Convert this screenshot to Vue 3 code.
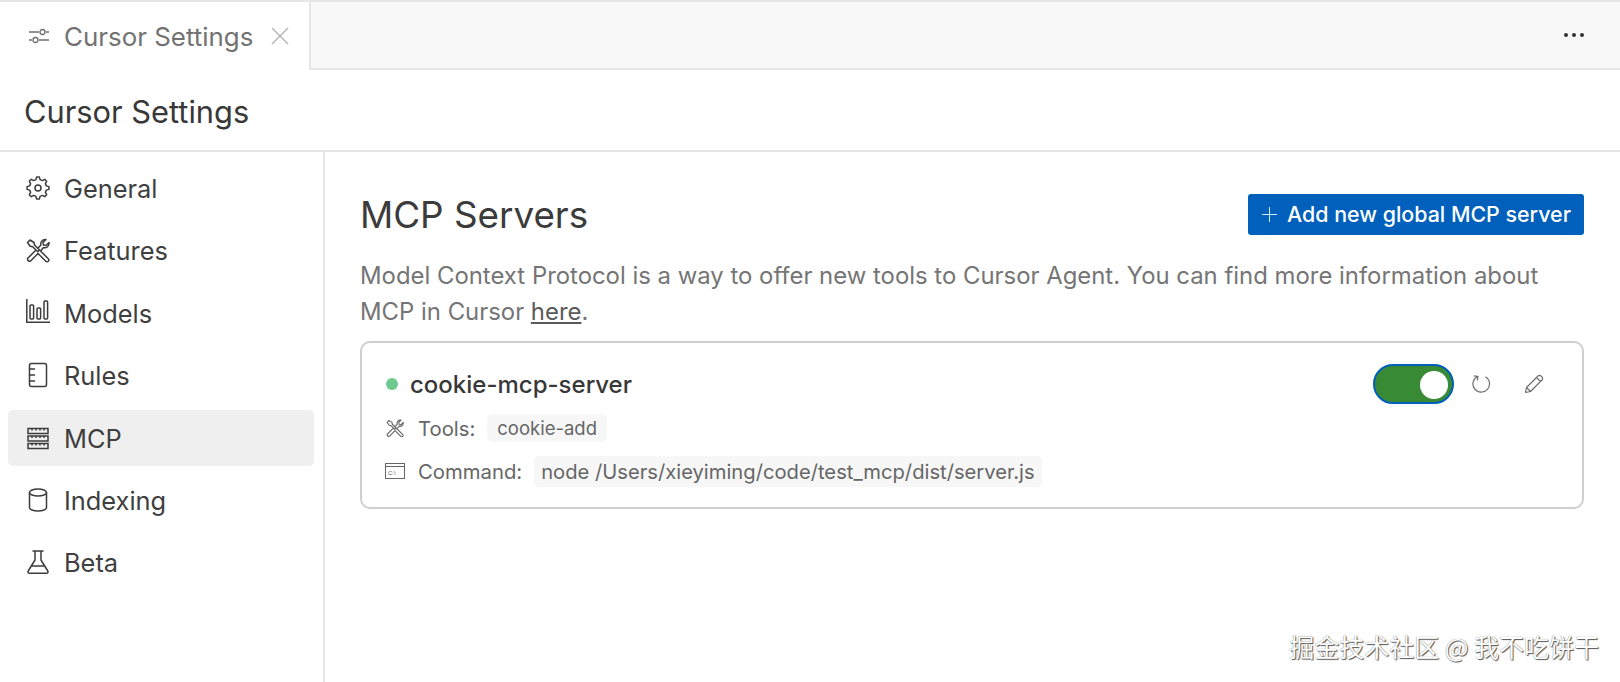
<script setup>
const navItems = [
  { name: 'General', icon: 'gear' },
  { name: 'Features', icon: 'tools' },
  { name: 'Models', icon: 'chart' },
  { name: 'Rules', icon: 'book' },
  { name: 'MCP', icon: 'server', active: true },
  { name: 'Indexing', icon: 'db' },
  { name: 'Beta', icon: 'flask' },
]

function gearPath() {
  const pts = []
  const teeth = 8
  for (let i = 0; i < teeth; i++) {
    const a = (i * 2 * Math.PI) / teeth
    const w = (2 * Math.PI) / teeth
    const list = [
      [8.6, a - w * 0.32],
      [11, a - w * 0.16],
      [11, a + w * 0.16],
      [8.6, a + w * 0.32],
    ]
    for (const [r, t] of list) {
      pts.push(`${(12 + r * Math.sin(t)).toFixed(2)} ${(12 - r * Math.cos(t)).toFixed(2)}`)
    }
  }
  return 'M' + pts.join('L') + 'Z'
}
const gear = gearPath()
const toolsPath = 'M1.500 4.500 4 2l4 2.500.5 2.500 5 5-1.800 1.800-5-5-2.500-.5zM14.500 13l7.800 7.800a1.700 1.700 0 0 1-2.500 2.500L12 15.500M12.500 9.500l2.500-2.500c-.9-3 1.500-6 5-5.500l-3 3 .5 2.500 2.500.5 3-3c.5 3.500-2.500 6-5.500 5L14.500 13M9.500 12.500 2 20a2 2 0 0 0 2.800 2.800l7.200-7.300'
</script>

<template>
  <div class="page">
    <header class="tabbar">
      <div class="tab">
        <svg class="tab-ico" viewBox="0 0 20 16" fill="none" stroke="#6f6f6f" stroke-width="1.300">
          <path d="M0 4h10M17 4h3M0 12h3M10 12h10" />
          <circle cx="13.500" cy="4" r="2.500" />
          <circle cx="6.500" cy="12" r="2.500" />
        </svg>
        <span class="tab-label">Cursor Settings</span>
        <svg class="tab-close" viewBox="0 0 18 18" fill="none" stroke="#b4b4b4" stroke-width="1.400">
          <path d="M1 1l16 16M17 1L1 17" />
        </svg>
      </div>
      <div class="tab-rest">
        <span class="dots"><i></i><i></i><i></i></span>
      </div>
    </header>
    <div class="title-bar">Cursor Settings</div>
    <div class="body">
      <nav class="side">
        <a v-for="item in navItems" :key="item.name" class="nav" :class="{ active: item.active }">
          <svg class="nav-ico" viewBox="0 0 24 24" fill="none" stroke="#3c3c3c" stroke-width="1.500" stroke-linejoin="round" stroke-linecap="round">
            <template v-if="item.icon === 'gear'">
              <circle cx="12" cy="12" r="3" />
              <path :d="gear" />
            </template>
            <path v-else-if="item.icon === 'tools'" :d="toolsPath" />
            <g v-else-if="item.icon === 'chart'" transform="translate(0 -2)" stroke-linecap="butt" stroke-linejoin="miter">
              <path d="M.8 0v23.200H24" />
              <rect x="4" y="6" width="3.600" height="14" rx="1" />
              <rect x="11" y="9" width="3.600" height="11" rx="1" />
              <rect x="18" y="2" width="3.600" height="18" rx="1" />
            </g>
            <template v-else-if="item.icon === 'book'">
              <rect x="3.500" y="0.500" width="17" height="23" rx="2" />
              <path d="M3.500 6h5M3.500 12h5M3.500 18h5" />
            </template>
            <g v-else-if="item.icon === 'server'" stroke-linecap="butt" stroke-linejoin="miter">
              <rect x="2" y="2.500" width="20" height="5" />
              <rect x="2" y="10" width="20" height="5" />
              <rect x="2" y="17.500" width="20" height="5" />
              <path d="M6 2.500v2M10 2.500v2M14 2.500v2M18 2.500v2M6 10v2M10 10v2M14 10v2M18 10v2M6 17.500v2M10 17.500v2M14 17.500v2M18 17.500v2" />
            </g>
            <template v-else-if="item.icon === 'db'">
              <ellipse cx="12" cy="4.500" rx="8.500" ry="3.500" />
              <path d="M3.500 4.500v15c0 2 3.800 3.500 8.500 3.500s8.500-1.500 8.500-3.500v-15" />
            </template>
            <path v-else d="M7 1h10M9 1v9L2.200 21a1.500 1.500 0 0 0 1.300 2.300h17a1.500 1.500 0 0 0 1.300-2.300L15 10V1M5.500 16h13" />
          </svg>
          <span class="nav-label">{{ item.name }}</span>
        </a>
      </nav>
      <main class="main">
        <div class="head">
          <h1>MCP Servers</h1>
          <button class="add"><span class="plus"></span>Add new global MCP server</button>
        </div>
        <p class="desc">Model Context Protocol is a way to offer new tools to Cursor Agent. You can find more information about MCP in Cursor <u>here</u>.</p>
        <section class="card">
          <div class="card-top">
            <span class="dot"></span>
            <span class="server-name">cookie-mcp-server</span>
            <span class="actions">
              <span class="switch"><span class="knob"></span></span>
              <svg class="act refresh" viewBox="0 0 20 20" fill="none" stroke="#6e6e6e" stroke-width="1.200">
                <path d="M5.500 2.500A8.300 8.300 0 1 0 13.500 2.800" />
                <path d="M1.800 1.800 6 2.400 5.200 6.600" />
              </svg>
              <svg class="act pencil" viewBox="0 0 20 20" fill="none" stroke="#6e6e6e" stroke-width="1.200" stroke-linejoin="round">
                <path d="M1.500 18.500 2.500 13.500 14 2a2 2 0 0 1 3 0l1 1a2 2 0 0 1 0 3L6.500 17.500zM2.500 13.500l4 4M12.500 3.500l4 4" />
              </svg>
            </span>
          </div>
          <div class="meta tools-row">
            <svg class="meta-ico" viewBox="0 0 24 24" fill="none" stroke="#666" stroke-width="1.500" stroke-linejoin="round" stroke-linecap="round">
              <path :d="toolsPath" />
            </svg>
            <span class="meta-label">Tools:</span>
            <span class="chip chip-tool">cookie-add</span>
          </div>
          <div class="meta cmd-row">
            <svg class="meta-ico" viewBox="0 0 20 16" fill="none" stroke="#666" stroke-width="1">
              <rect x=".5" y=".5" width="19" height="15" />
              <path d="M.5 3.500h19" />
              <text x="3" y="11.500" font-size="6" fill="#666" stroke="none" font-family="Liberation Sans">C:\</text>
            </svg>
            <span class="meta-label">Command:</span>
            <span class="chip chip-cmd">node /Users/xieyiming/code/test_mcp/dist/server.js</span>
          </div>
        </section>
      </main>
    </div>
    <div class="watermark">掘金技术社区 @ 我不吃饼干</div>
  </div>
</template>

<style>
html, body { margin: 0; background: #fff; overflow: hidden; }
</style>

<style scoped>
.page {
  position: relative;
  width: 1620px;
  height: 682px;
  overflow: hidden;
  background: #fff;
  font-family: Inter, "Noto Sans CJK SC", sans-serif;
  color: #3b3b3b;
}
.tabbar {
  display: flex;
  height: 70px;
  box-sizing: border-box;
  border-top: 2px solid #e6e6e6;
  background: #f8f8f8;
}
.tab {
  display: flex;
  align-items: center;
  box-sizing: border-box;
  width: 311px;
  padding-left: 29px;
  background: #fff;
  border-right: 2px solid #e6e6e6;
}
.tab-ico { width: 20px; height: 16px; margin-right: 15px; }
.tab-label { font-size: 25.900px; color: #727272; }
.tab-close { width: 18px; height: 18px; margin-left: 18px; }
.tab-rest {
  flex: 1;
  display: flex;
  align-items: center;
  justify-content: flex-end;
  padding-right: 36px;
  border-bottom: 2px solid #e6e6e6;
}
.dots { display: flex; gap: 4px; }
.dots i { width: 4px; height: 4px; border-radius: 50%; background: #333; }
.title-bar {
  box-sizing: border-box;
  height: 84px;
  padding: 3px 24px 0;
  display: flex;
  align-items: center;
  border-top: 2px solid #e6e6e6;
  border-bottom: 2px solid #e6e6e6;
  font-size: 30.800px;
  color: #383838;
  margin-top: -2px;
}
.body { display: flex; height: 530px; }
.side {
  box-sizing: border-box;
  width: 325px;
  padding: 8px 9px 0 8px;
  border-right: 2px solid #e6e6e6;
}
.nav {
  display: flex;
  align-items: center;
  height: 56px;
  margin-bottom: 6.400px;
  padding-left: 18px;
  border-radius: 5px;
  font-size: 25.400px;
  color: #3f3f3f;
}
.nav-label { padding-top: 1px; }
.nav.active { background: #efefef; }
.nav-ico { width: 24px; height: 24px; margin-right: 14px; flex: none; overflow: visible; }
.main { flex: 1; padding: 41px 36px 0 35px; min-width: 0; }
.head { display: flex; justify-content: space-between; align-items: center; height: 42px; }
h1 { margin: 0; padding-top: 1px; font-size: 36.800px; font-weight: 400; color: #3b3b3b; }
.add {
  display: flex;
  align-items: center;
  width: 336px;
  height: 41px;
  padding: 0 0 0 14px;
  border: 0;
  border-radius: 3px;
  background: #0060bc;
  color: #fff;
  font: 500 21.400px Inter, sans-serif;
}
.plus {
  position: relative;
  width: 15px;
  height: 15px;
  margin-right: 10px;
}
.plus::before, .plus::after { content: ""; position: absolute; background: #d8ecff; }
.plus::before { left: 0; right: 0; top: 7px; height: 1px; }
.plus::after { top: 0; bottom: 0; left: 7px; width: 1px; }
.desc { margin: 23px 0 0; font-size: 23.900px; line-height: 36px; color: #757575; }
.desc u { color: #5a5a5a; }
.card {
  box-sizing: border-box;
  height: 168px;
  margin-top: 11px;
  padding: 21px 23px 0 24px;
  border: 2px solid #cfcfcf;
  border-radius: 10px;
}
.card-top { display: flex; align-items: center; height: 40px; }
.dot { width: 12px; height: 12px; border-radius: 50%; background: #6fc98f; margin-right: 12px; }
.server-name { font-size: 24px; font-weight: 500; color: #383838; }
.actions { margin-left: auto; display: flex; align-items: center; }
.switch {
  box-sizing: border-box;
  width: 81px;
  height: 40px;
  padding: 5px 4px;
  display: flex;
  justify-content: flex-end;
  border: 2px solid #005fb8;
  border-radius: 20px;
  background: #388a34;
}
.knob { width: 28px; height: 28px; border-radius: 50%; background: #fff; }
.act { width: 20px; height: 20px; }
.refresh { margin-left: 18px; }
.pencil { margin-left: 32px; margin-right: 15px; }
.meta { display: flex; align-items: center; font-size: 20.300px; color: #666; margin-left: -1px; }
.tools-row { margin-top: 6px; height: 36px; }
.cmd-row { margin-top: 7px; height: 36px; }
.meta-ico { width: 20px; height: 18px; margin-right: 13px; flex: none; }
.meta-label { margin-right: 12px; }
.chip { background: #f7f7f7; border-radius: 5px; }
.chip-tool { padding: 3px 10px; font-size: 18.500px; }
.chip-cmd { padding: 3px 7px; font-size: 20.200px; }
.watermark {
  position: absolute;
  right: 21px;
  top: 628px;
  font-size: 25px;
  color: #fff;
  text-shadow: 1px 1px 1px #555, 0 0 1px #666;
  font-family: "Noto Sans CJK SC", sans-serif;
}
</style>
